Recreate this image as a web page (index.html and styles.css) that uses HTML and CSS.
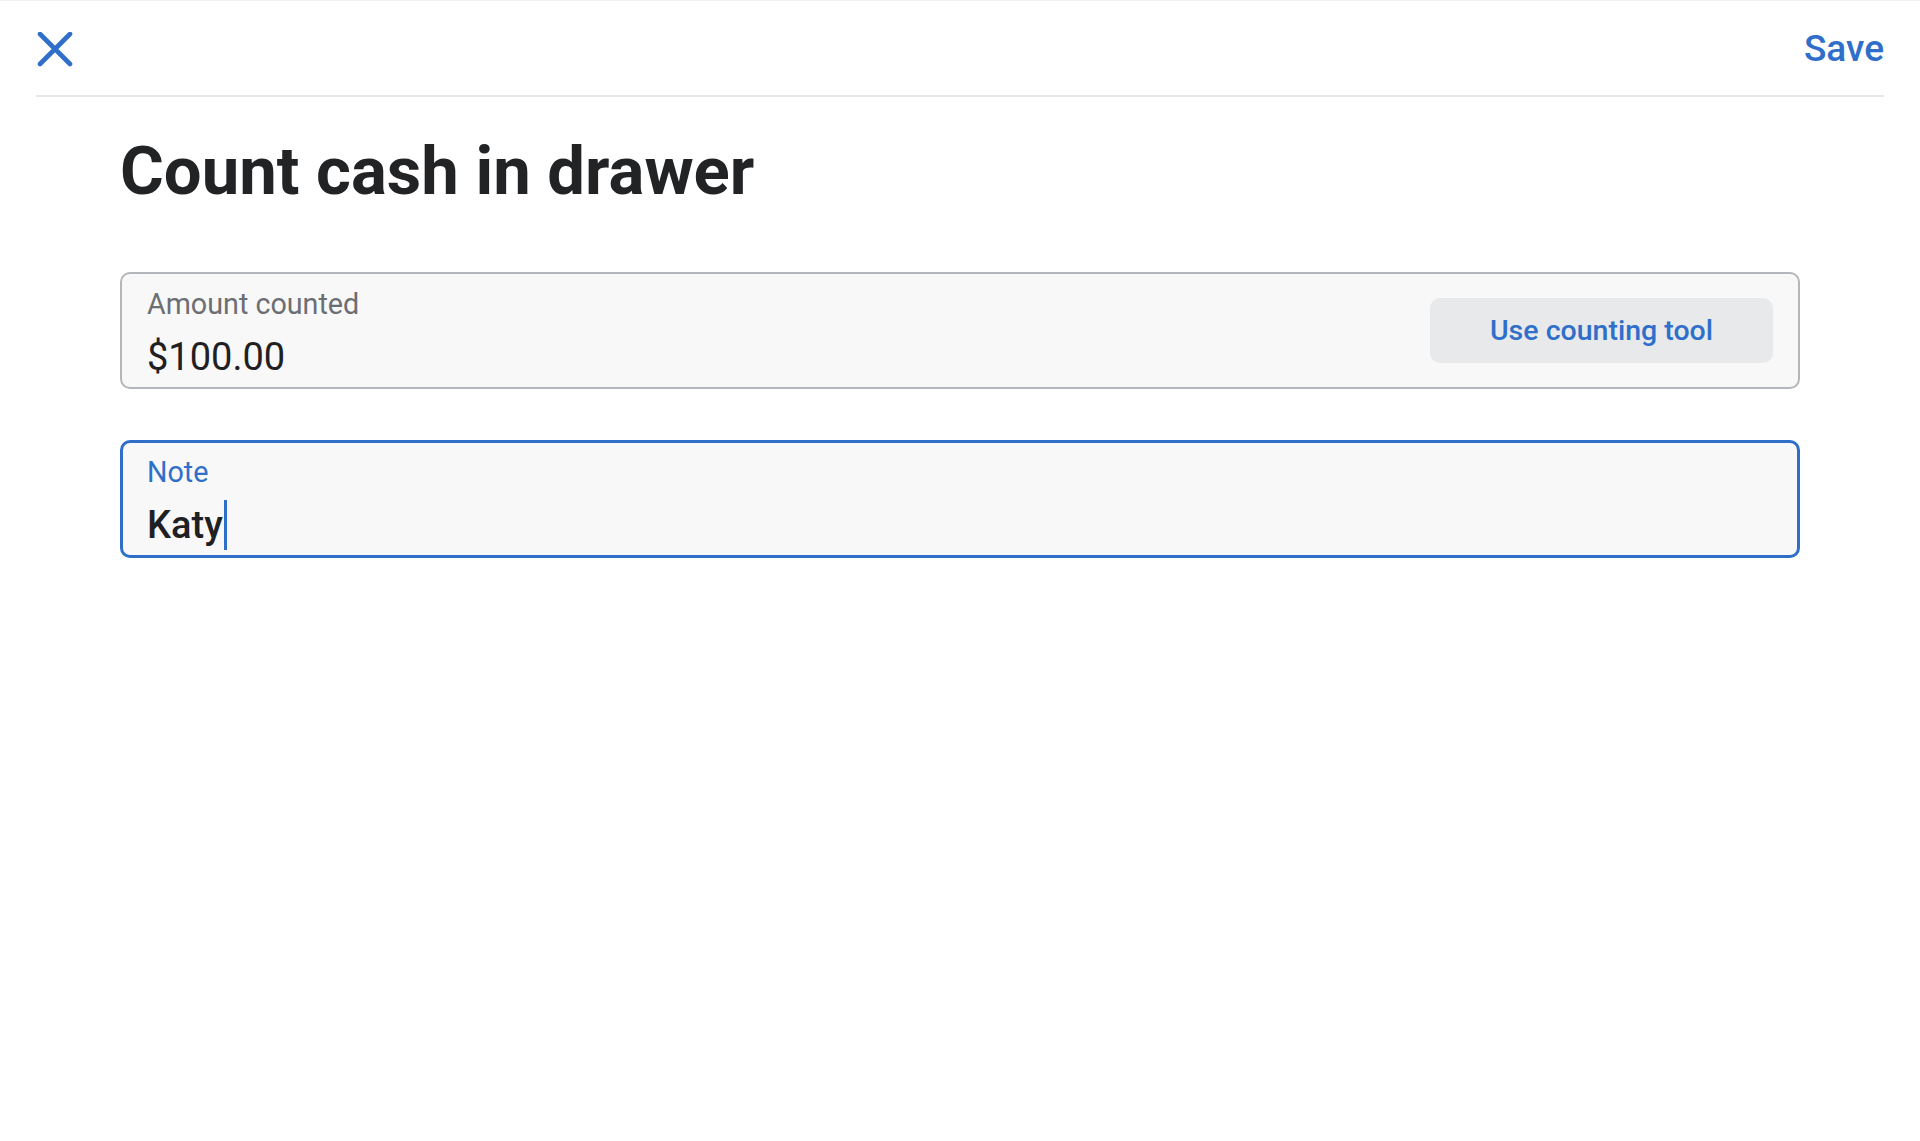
FILE: index.html
```html
<!DOCTYPE html>
<html lang="en">
<head>
<meta charset="utf-8">
<title>Count cash in drawer</title>
<link rel="stylesheet" href="styles.css">
</head>
<body>
<header class="topbar">
  <button class="icon-btn" aria-label="Close">
    <svg class="close-icon" viewBox="0 0 36 36" width="36" height="36">
      <path d="M3 2 L33 32 M33 2 L3 32" stroke="#2f6fca" stroke-width="4.6" stroke-linecap="round" fill="none"/>
    </svg>
  </button>
  <button class="save-btn">Save</button>
</header>
<main class="content">
  <h1 class="title">Count cash in drawer</h1>
  <div class="field">
    <div class="field-body">
      <div class="field-label">Amount counted</div>
      <div class="field-value">$100.00</div>
    </div>
    <button class="tool-btn">Use counting tool</button>
  </div>
  <div class="field field-focused">
    <div class="field-body">
      <div class="field-label">Note</div>
      <div class="field-value field-value-strong">Katy<span class="caret"></span></div>
    </div>
  </div>
</main>
</body>
</html>
```
FILE: styles.css
```css
* { box-sizing: border-box; }
html, body { margin: 0; padding: 0; background: #ffffff; }
body {
  font-family: Roboto, "Noto Sans", "Liberation Sans", sans-serif;
  color: #222325;
  border-top: 1px solid #f0f0f0;
  min-height: 1141px;
}
button { font-family: inherit; border: 0; background: none; padding: 0; margin: 0; cursor: pointer; }

.topbar {
  margin: 0 36px;
  height: 96px;
  border-bottom: 2px solid #e8e8e8;
  display: flex;
  align-items: center;
  justify-content: space-between;
}
.icon-btn { display: flex; width: 36px; height: 36px; margin-left: 1px; margin-top: 3px; }
.close-icon { display: block; }
.save-btn {
  font-size: 37px;
  font-weight: 500;
  color: #2f6fca;
  line-height: 42px;
  margin-top: 2px;
}

.content { padding: 0 120px; }
.title {
  margin: 34px 0 61px;
  font-size: 67px;
  line-height: 80px;
  font-weight: 700;
  color: #222325;
}

.field {
  display: flex;
  align-items: center;
  height: 117px;
  border: 2px solid #b3b6ba;
  border-radius: 10px;
  background: #f8f8f8;
  padding: 13px 25px 8px 25px;
  margin-bottom: 51px;
}
.field-focused {
  height: 118px;
  border: 3px solid #2f6fca;
  padding: 12px 22px 8px 24px;
}
.field-body { flex: 1; align-self: flex-start; }
.field-label {
  font-size: 28.7px;
  line-height: 34px;
  color: #6b6e72;
}
.field-focused .field-label { color: #2f6fca; }
.field-value {
  margin-top: 14px;
  font-size: 38px;
  line-height: 44px;
  color: #1f2022;
}
.field-value-strong { font-weight: 500; }
.caret {
  display: inline-block;
  width: 3px;
  height: 50px;
  margin: -6px 0 -2px 1px;
  vertical-align: -10px;
  background: #2f6fca;
}
.tool-btn {
  width: 343px;
  height: 65px;
  margin-top: -5px;
  border-radius: 10px;
  background: #e8e9eb;
  color: #2f6fca;
  font-size: 28.5px;
  font-weight: 500;
}
```
